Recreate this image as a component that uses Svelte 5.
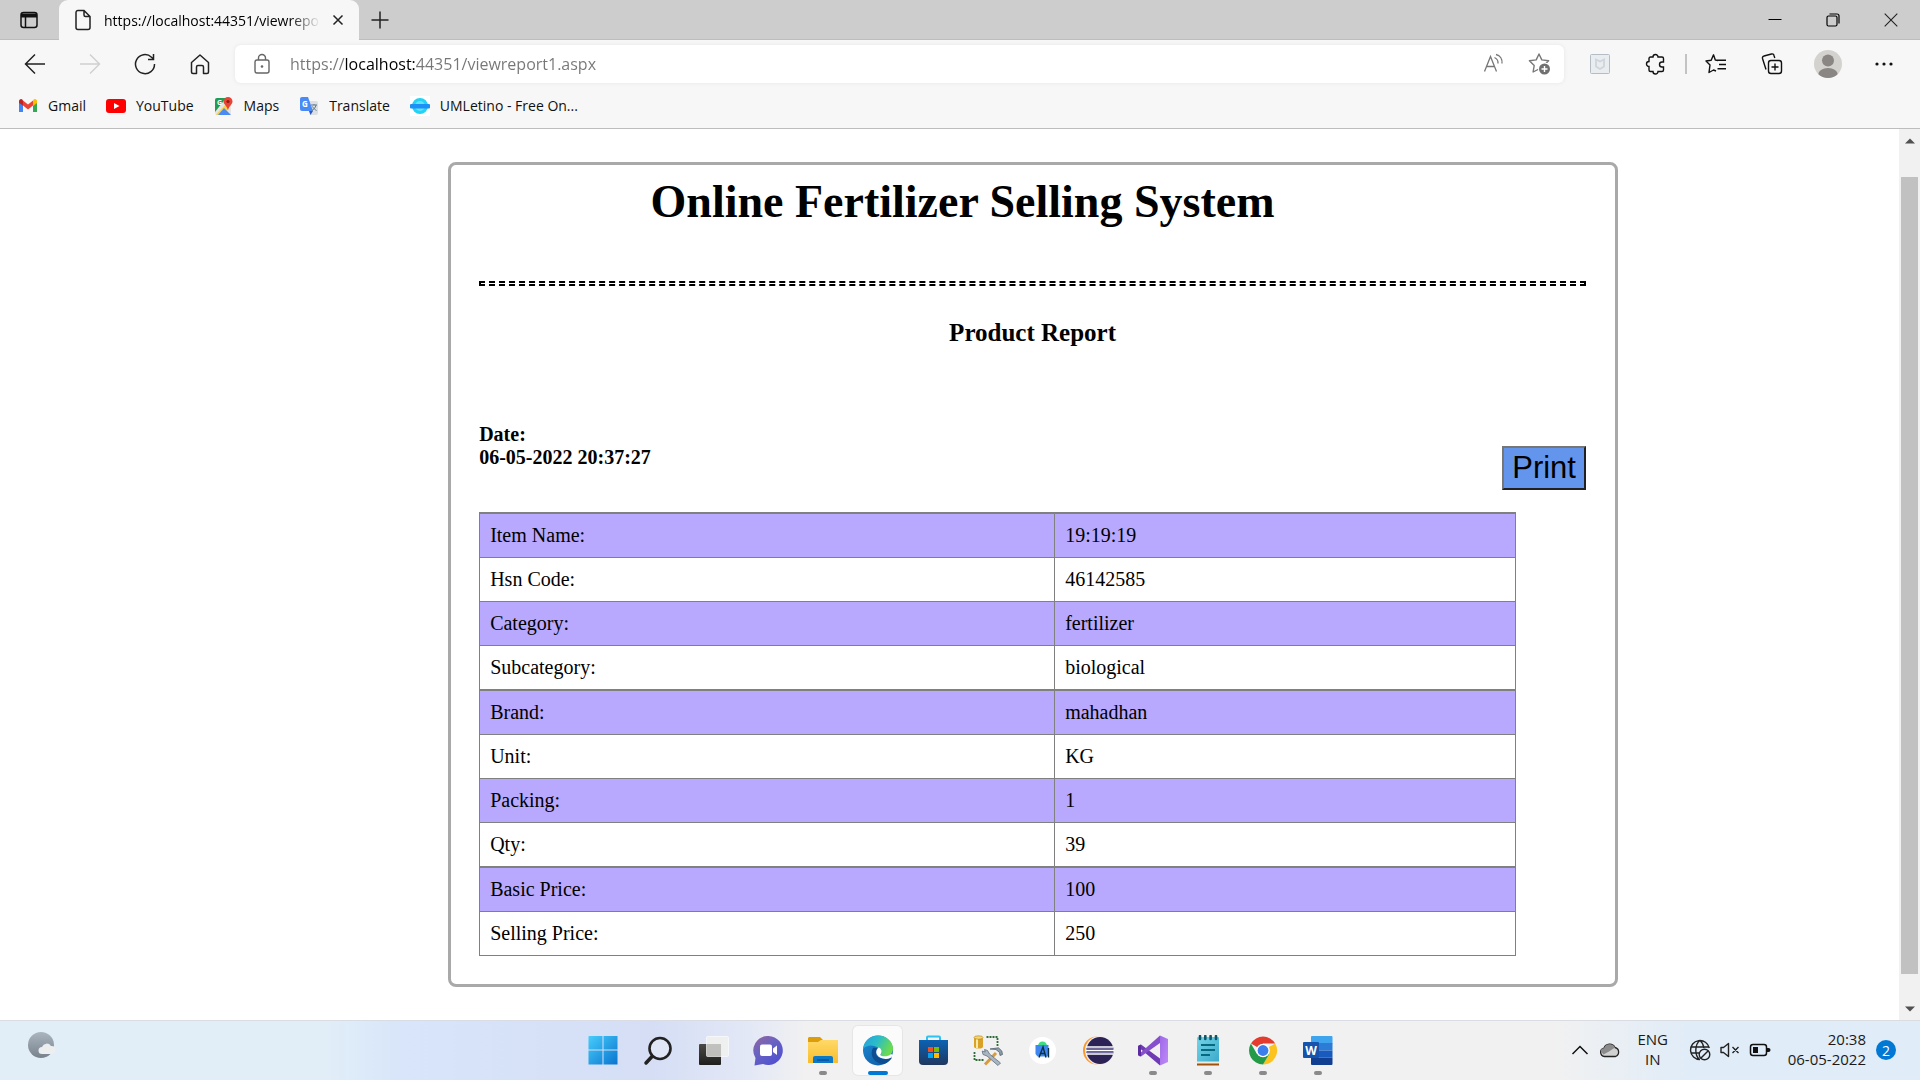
<script>
  const bookmarks = [
    { id: 'gmail', label: 'Gmail' },
    { id: 'youtube', label: 'YouTube' },
    { id: 'maps', label: 'Maps' },
    { id: 'translate', label: 'Translate' },
    { id: 'uml', label: 'UMLetino - Free On...' }
  ];

  const product = [
    ['Item Name:', '19:19:19'],
    ['Hsn Code:', '46142585'],
    ['Category:', 'fertilizer'],
    ['Subcategory:', 'biological'],
    ['Brand:', 'mahadhan'],
    ['Unit:', 'KG'],
    ['Packing:', '1'],
    ['Qty:', '39'],
    ['Basic Price:', '100'],
    ['Selling Price:', '250']
  ];

  const apps = [
    { id: 'start', name: 'Start' },
    { id: 'search', name: 'Search' },
    { id: 'tasks', name: 'Task view' },
    { id: 'chat', name: 'Chat' },
    { id: 'files', name: 'File Explorer', open: true },
    { id: 'edge', name: 'Microsoft Edge', active: true },
    { id: 'store', name: 'Microsoft Store' },
    { id: 'sql', name: 'SQL tools' },
    { id: 'android', name: 'Android Studio' },
    { id: 'eclipse', name: 'Eclipse' },
    { id: 'vs', name: 'Visual Studio', open: true },
    { id: 'notepad', name: 'Notepad', open: true },
    { id: 'chrome', name: 'Google Chrome', open: true },
    { id: 'word', name: 'Word', open: true }
  ];

  let url = $state('https://localhost:44351/viewreport1.aspx');
</script>

{#snippet bookmarkIcon(id)}
  <svg width="20" height="20" viewBox="0 0 20 20" aria-hidden="true">
    {#if id === 'gmail'}
      <path d="M1 4.500v11.500h4V8z" fill="#4285f4" />
      <path d="M19 4.500v11.500h-4V8z" fill="#34a853" />
      <path d="M15 5v5l4-3V5a2 2 0 0 0-3.500-1.300z" fill="#fbbc04" />
      <path d="M5 9.500V4.500l5 4 5-4v5l-5 4z" fill="#ea4335" />
      <path d="M1 5a2 2 0 0 1 3.500-1.300L5 4.500v5L1 7z" fill="#c5221f" />
    {:else if id === 'youtube'}
      <rect x="0" y="3" width="20" height="14" rx="3" fill="#f00" />
      <path d="M8 7l5.500 3L8 13z" fill="#fff" />
    {:else if id === 'maps'}
      <rect x="1" y="2" width="16" height="17" rx="2" fill="#e4e4e4" />
      <path d="M3 2h9L1 16V4a2 2 0 0 1 2-2z" fill="#1e9e53" />
      <path d="M2 18.500L14 6l3 3-8 10H3z" fill="#fdd33b" />
      <path d="M4 19l6-7 7 7z" fill="#4a8af4" />
      <text x="3" y="8.500" font-size="7" font-weight="700" fill="#fff">G</text>
      <path d="M14 1a4.500 4.500 0 0 1 4.500 4.500c0 3-3.500 4-4.500 9-1-5-4.500-6-4.500-9A4.500 4.500 0 0 1 14 1z" fill="#e94335" />
      <circle cx="14" cy="5.500" r="1.600" fill="#8c1c13" />
    {:else if id === 'translate'}
      <path d="M8 5h9a2 2 0 0 1 2 2v10a2 2 0 0 1-2 2h-6z" fill="#dcdfe3" />
      <path d="M10 15l4 0-2.500 4z" fill="#2a56c6" />
      <path d="M3 1h6l5 14H3a2 2 0 0 1-2-2V3a2 2 0 0 1 2-2z" fill="#4a8af4" />
      <path d="M12 9h6M15 8v1M17 9c-.5 3-2.500 4.500-4 5.500M13.500 10.500c1 2 2.500 3 4 4" stroke="#607988" stroke-width="1" fill="none" />
      <text x="3" y="11" font-size="8" font-weight="700" fill="#fff">G</text>
    {:else}
      <rect width="20" height="20" fill="#fff" />
      <circle cx="10" cy="10" r="6.500" fill="#5fe3fb" stroke="#22d3f5" stroke-width="3" />
      <rect x="0" y="8" width="20" height="4.500" rx="1" fill="#1e90f5" />
    {/if}
  </svg>
{/snippet}

{#snippet appIcon(id)}
  <svg width="32" height="32" viewBox="0 0 32 32" aria-hidden="true">
    {#if id === 'start'}
      <defs>
        <linearGradient id="win" x1="0" y1="0" x2="1" y2="1" gradientUnits="objectBoundingBox">
          <stop offset="0" stop-color="#46cdfb" />
          <stop offset="1" stop-color="#0a74cf" />
        </linearGradient>
      </defs>
      <path d="M2 1h13.500v13.500H1.500V1.500zM16.500 1H30.500v13.500h-14zM1.500 15.500h14v14h-14zM16.500 15.500h14v14h-14z" fill="url(#win)" />
    {:else if id === 'search'}
      <circle cx="18" cy="13.500" r="10.500" fill="#e6ebf7" fill-opacity=".6" stroke="#222" stroke-width="2.600" />
      <path d="M10 21.500L4 28" stroke="#222" stroke-width="3.500" stroke-linecap="round" />
    {:else if id === 'tasks'}
      <defs>
        <linearGradient id="tv" x1="0" y1="0" x2="0" y2="1"><stop offset="0" stop-color="#4a4a47" /><stop offset="1" stop-color="#1e1e1c" /></linearGradient>
      </defs>
      <rect x="2" y="9" width="22" height="21" rx="1" fill="url(#tv)" />
      <rect x="9.500" y="1.500" width="22" height="20" rx="1" fill="#f1f1ee" fill-opacity=".82" stroke="#fff" stroke-opacity=".6" />
      <rect x="10" y="9" width="14" height="12" fill="#aaa" fill-opacity=".45" />
    {:else if id === 'chat'}
      <defs>
        <linearGradient id="ch" x1="0" y1="0" x2=".7" y2="1"><stop offset="0" stop-color="#95659c" /><stop offset=".45" stop-color="#6a63c2" /><stop offset="1" stop-color="#4f50d0" /></linearGradient>
      </defs>
      <path d="M16.500 1a14.500 14.500 0 1 1-5.500 28l-8.500 1.500L3.500 23A14.500 14.500 0 0 1 16.500 1z" fill="url(#ch)" />
      <rect x="8" y="9.500" width="12" height="11.500" rx="2" fill="#fff" />
      <path d="M21 13.500l4-3v9.500l-4-3z" fill="#fff" />
    {:else if id === 'files'}
      <defs>
        <linearGradient id="fo" x1="0" y1="0" x2="0" y2="1"><stop offset="0" stop-color="#ffd968" /><stop offset="1" stop-color="#f8bd2b" /></linearGradient>
      </defs>
      <path d="M2 2h11l3 3-3 5H1V3z" fill="#dd9d0b" />
      <path d="M1 7h10l3-2h17v23H1z" fill="url(#fo)" />
      <path d="M8 21h16a2 2 0 0 1 2 2v5H6v-5a2 2 0 0 1 2-2z" fill="#0c78c8" />
      <path d="M10 25h12" stroke="#08529b" stroke-width="1.500" />
    {:else if id === 'edge'}
      <defs>
        <linearGradient id="e1" x1="0" y1="0" x2="1" y2=".4"><stop offset="0" stop-color="#279fdc" /><stop offset=".5" stop-color="#2bbcc9" /><stop offset="1" stop-color="#6bdb4e" /></linearGradient>
        <linearGradient id="e2" x1="0" y1="0" x2=".6" y2="1"><stop offset="0" stop-color="#1a8fd8" /><stop offset="1" stop-color="#1260a9" /></linearGradient>
      </defs>
      <circle cx="16" cy="15.500" r="15" fill="url(#e2)" />
      <path d="M1 14C2 5.500 8.500.5 16 .5c8.500 0 15 6 15 13 0 6-4.500 8.500-8.500 8.500-3 0-4.500-1.200-4-2.200 1.500-2 1-4.800-1.500-6.600C11 9 4.500 10 1 14z" fill="url(#e1)" />
      <path d="M11 13c-3 5-1 13 7 15.500 5 1.500 9-1.500 11.500-5 .5-1-.3-1.200-1-.7-5.500 3-12 1-14-2.500-1.200-2.500-.6-5 1-7-2-.8-3.500-.8-4.500-.3z" fill="#0e4d92" />
      <path d="M16.500 12.500c-2 1.500-3 4.500-1.700 7 2.500 4.500 9.500 5.500 14 3.200L31 20l-2-1c-2 2.500-9.500 3.300-10.500.9-.4-.8 1-1.500 1-3.500 0-1.700-1-3.500-3-3.900z" fill="#fff" />
    {:else if id === 'store'}
      <defs>
        <linearGradient id="st" x1="0" y1="0" x2="0" y2="1"><stop offset="0" stop-color="#0b62b4" /><stop offset="1" stop-color="#20375f" /></linearGradient>
      </defs>
      <path d="M10 6V2.500a1 1 0 0 1 1-1h11a1 1 0 0 1 1 1V6" fill="none" stroke="#2cc2f4" stroke-width="2" />
      <path d="M2 5h29v21a4 4 0 0 1-4 4H6a4 4 0 0 1-4-4z" fill="url(#st)" />
      <rect x="11" y="12" width="5" height="5" fill="#f25022" />
      <rect x="17" y="12" width="5" height="5" fill="#7fba00" />
      <rect x="11" y="18" width="5" height="5" fill="#00a4ef" />
      <rect x="17" y="18" width="5" height="5" fill="#ffb900" />
    {:else if id === 'sql'}
      <path d="M2 2.500v9a4.500 2 0 0 0 9 0v-9z" fill="#d9a125" />
      <path d="M4 3v10l2 .5V3z" fill="#fbe9a6" />
      <ellipse cx="6.500" cy="2.500" rx="4.500" ry="1.700" fill="#f4d673" stroke="#b07d10" stroke-width=".6" />
      <path d="M14.500 2h11v10M2.500 17v8h10" fill="none" stroke="#2f6b34" stroke-width="1.800" stroke-dasharray="2 1" />
      <path d="M13 29.500L24 18" stroke="#d99a3d" stroke-width="3" />
      <path d="M12.500 14.500l3 1 2 3.500 11 9-2.500 2.500L15 21l-4-1.500-.8-3.500 3 1z" fill="#a9b5c1" stroke="#61707e" stroke-width=".8" />
      <path d="M18 14l6 .5 3.500 3 .5 3 2.500-1-.7-3.500-3.300-3.200z" fill="#8f9dab" stroke="#56636f" stroke-width=".8" />
    {:else if id === 'android'}
      <circle cx="15.500" cy="15.500" r="13.500" fill="#fff" />
      <path d="M11 11a4.500 4.500 0 0 1 9 0z" fill="#3ddc84" />
      <path d="M8.500 10h13v9l-1 2.500h-10L8.500 19z" fill="#3f86f0" />
      <path d="M12 22.500L16 12l3 10.500M13.500 18.500h4.500M21.500 13v9.500" fill="none" stroke="#073042" stroke-width="1.400" />
    {:else if id === 'eclipse'}
      <circle cx="15" cy="15.500" r="14" fill="#f79a30" />
      <circle cx="17.500" cy="15.500" r="14.500" fill="#f1e9ee" />
      <circle cx="18" cy="15.500" r="13.500" fill="#2c2255" />
      <path d="M4 12h27M4 15.500h28M4 19h27" stroke="#fff" stroke-width="1.600" />
      <path d="M4 13.800h27M4 17.300h27" stroke="#8e86b4" stroke-width="1" />
    {:else if id === 'vs'}
      <defs>
        <linearGradient id="vsg" x1="0" y1="0" x2="1" y2="1"><stop offset="0" stop-color="#9d6ae6" /><stop offset="1" stop-color="#c08afa" /></linearGradient>
      </defs>
      <path d="M1 11l3-1.500 19 14v7L3 13.500v8L1 20z" fill="#6f3bb5" />
      <path d="M1 20l3 1.500L23 8V.5z" fill="#8650cc" />
      <path d="M1 11l3-1.500v12L1 20z" fill="#5c2b9d" />
      <path d="M23 .5L31 4v23l-8 3.500z" fill="url(#vsg)" />
    {:else if id === 'notepad'}
      <defs>
        <linearGradient id="np" x1="0" y1="0" x2="1" y2="1"><stop offset="0" stop-color="#73d5e8" /><stop offset="1" stop-color="#3aa9cb" /></linearGradient>
      </defs>
      <rect x="5" y="2" width="22" height="26" rx="1" fill="url(#np)" />
      <rect x="5" y="26.500" width="22" height="2" fill="#f0ead9" />
      <rect x="5" y="28.500" width="22" height="2" fill="#a0520f" />
      <path d="M8 1v3M13.300 1v3M18.600 1v3M24 1v3" stroke="#095768" stroke-width="2.600" stroke-linecap="round" />
      <path d="M9 10h14M9 15h14M9 20h9" stroke="#08697e" stroke-width="2" />
    {:else if id === 'chrome'}
      <path d="M16 15.500L4 8.500A14 14 0 0 1 28.200 8.500H16z" fill="#e33b2e" />
      <path d="M16 15.500L28.200 8.500A14 14 0 0 1 16 29.500l6-10.500z" fill="#fcc31e" />
      <path d="M16 15.500l6 4-6 10A14 14 0 0 1 3.900 8.500L10 19z" fill="#229a48" />
      <circle cx="16" cy="15.500" r="6.800" fill="#fff" />
      <circle cx="16" cy="15.500" r="5.400" fill="#3b7ded" />
    {:else}
      <path d="M10 1h19.500a1 1 0 0 1 1 1v6.500H9V2a1 1 0 0 1 1-1z" fill="#3fa3ee" />
      <path d="M9 8h21.500v7.500H9z" fill="#2b7cd6" />
      <path d="M9 15.500h21.500v7H9z" fill="#185abd" />
      <path d="M9 22.500h21.500V29a1 1 0 0 1-1 1H10a1 1 0 0 1-1-1z" fill="#103f91" />
      <rect x="1" y="7" width="16" height="16" rx="1" fill="#1553ac" />
      <text x="9" y="19.500" text-anchor="middle" font-size="12" font-weight="700" fill="#fff">W</text>
    {/if}
  </svg>
{/snippet}

<div class="screen">
  <header class="tabs">
    <button class="tool wide" aria-label="Tab actions">
      <svg width="20" height="20" viewBox="0 0 20 20"><rect x="2" y="2.500" width="16" height="15" rx="2.500" fill="none" stroke="#111" stroke-width="1.500" /><path d="M2 3.500h16v4H2z" fill="#111" /><path d="M6.500 7v10" stroke="#111" stroke-width="1.500" /></svg>
    </button>
    <div class="tab">
      <svg width="18" height="22" viewBox="0 0 18 22"><path d="M4 1.500h6l6 6V18.500a2 2 0 0 1-2 2H4a2 2 0 0 1-2-2V3.500a2 2 0 0 1 2-2zM10 1.500V6a1.500 1.500 0 0 0 1.500 1.500H16" fill="none" stroke="#222" stroke-width="1.500" /></svg>
      <span class="tab-title">https://localhost:44351/viewreport1.aspx</span>
      <button class="close" aria-label="Close tab">
        <svg width="12" height="12" viewBox="0 0 12 12"><path d="M1.500 1.500l9 9M10.500 1.500l-9 9" stroke="#222" stroke-width="1.500" /></svg>
      </button>
    </div>
    <button class="tool new" aria-label="New tab">
      <svg width="18" height="18" viewBox="0 0 18 18"><path d="M9 .5v17M.5 9h17" stroke="#222" stroke-width="1.500" /></svg>
    </button>
    <div class="grow"></div>
    <button class="tool wide" aria-label="Minimize"><svg width="14" height="14" viewBox="0 0 14 14"><path d="M.5 6.500h13" stroke="#000" /></svg></button>
    <button class="tool wide" aria-label="Restore"><svg width="14" height="14" viewBox="0 0 14 14"><rect x="1" y="3" width="10" height="10" rx="1.500" fill="none" stroke="#000" stroke-width="1.200" /><path d="M3.500 1H11a2 2 0 0 1 2 2v7.500" fill="none" stroke="#000" stroke-width="1.200" /></svg></button>
    <button class="tool wide" aria-label="Close window"><svg width="14" height="14" viewBox="0 0 14 14"><path d="M.7.7l12.600 12.600M13.300.7L.7 13.300" stroke="#222" stroke-width="1.100" /></svg></button>
  </header>

  <nav class="toolbar" aria-label="Browser">
    <button class="nav" aria-label="Back"><svg width="22" height="22" viewBox="0 0 22 22"><path d="M21 11H1.500M11 1.500L1.500 11l9.500 9.500" fill="none" stroke="#222" stroke-width="1.500" /></svg></button>
    <button class="nav" aria-label="Forward"><svg width="22" height="22" viewBox="0 0 22 22"><path d="M1 11h19.500M11 1.500l9.500 9.500-9.500 9.500" fill="none" stroke="#d0d0d0" stroke-width="1.500" /></svg></button>
    <button class="nav" aria-label="Refresh"><svg width="22" height="22" viewBox="0 0 22 22"><path d="M20.500 11A9.500 9.500 0 1 1 17.500 4.200L19.500 6M19.500 1v5.500H14" fill="none" stroke="#222" stroke-width="1.500" /></svg></button>
    <button class="nav" aria-label="Home"><svg width="22" height="22" viewBox="0 0 22 22"><path d="M2.500 9.500L11 2l8.500 7.500V19a1.500 1.500 0 0 1-1.500 1.500h-3.500V14a1.500 1.500 0 0 0-1.500-1.500H9A1.500 1.500 0 0 0 7.500 14v6.500H4A1.500 1.500 0 0 1 2.500 19z" fill="none" stroke="#222" stroke-width="1.500" stroke-linejoin="round" /></svg></button>
    <div class="address">
      <svg width="18" height="22" viewBox="0 0 18 22"><rect x="2" y="7" width="14" height="13" rx="2" fill="none" stroke="#666" stroke-width="1.400" /><path d="M5.500 7V5a3.500 3.500 0 0 1 7 0v2" fill="none" stroke="#666" stroke-width="1.400" /><circle cx="9" cy="13.500" r="1.300" fill="#666" /></svg>
      <input type="text" aria-label="Address" bind:value={url} />
      <button class="inner" aria-label="Read aloud"><svg width="22" height="22" viewBox="0 0 22 22"><path d="M1.500 18.500L7.500 3.500l6 15M3.500 13.500h8M11.500 4.500a6 6 0 0 1 3.500 6M13 1.500c4 1 6.500 4.500 6 9" fill="none" stroke="#777" stroke-width="1.300" /></svg></button>
      <button class="inner" aria-label="Add to favorites"><svg width="24" height="24" viewBox="0 0 24 24"><path d="M11 2l2.800 5.900 6.800.9-4.800 4.700 1 6.500-5.800-3-5.900 3 1.100-6.500L1.400 8.800l6.800-.9z" fill="none" stroke="#777" stroke-width="1.400" stroke-linejoin="round" /><circle cx="16.500" cy="17" r="6.500" fill="#fff" /><circle cx="16.500" cy="17" r="5.500" fill="#707070" /><path d="M16.500 14v6M13.500 17h6" stroke="#fff" stroke-width="1.400" /></svg></button>
    </div>
    <button class="ext" aria-label="WebAdvisor"><svg width="22" height="22" viewBox="0 0 22 22"><rect x="1.500" y="1.500" width="19" height="19" rx="1" fill="#e9edf0" stroke="#b4bdc5" /><path d="M7 6.500l4 2 4-2v7l-4 2.500-4-2.500z" fill="none" stroke="#cfd5da" stroke-width="1.800" /></svg></button>
    <button class="ext" aria-label="Extensions"><svg width="22" height="22" viewBox="0 0 22 22"><path d="M5.500 4H8a2.500 2.500 0 0 1 5 0h4a1.500 1.500 0 0 1 1.500 1.500V9h-1.500a2.500 2.500 0 0 0 0 5h1.500v3a1.500 1.500 0 0 1-1.500 1.500h-4a2.500 2.500 0 0 1-5 0H5.500A1.500 1.500 0 0 1 4 17v-3.500a2.500 2.500 0 0 1 0-5V5.500A1.500 1.500 0 0 1 5.500 4z" fill="none" stroke="#111" stroke-width="1.400" /></svg></button>
    <div class="divider"></div>
    <button class="ext" aria-label="Favorites"><svg width="22" height="22" viewBox="0 0 22 22"><path d="M13 7.500L10.300 7 8.500 1.800 6.200 7.200 1 8l4 4-1 7.500 4.500-2.500 2.500 1M12.500 7.300h8.500M14 11.500h7M12.500 15.700h8.500" fill="none" stroke="#111" stroke-width="1.400" stroke-linejoin="round" /></svg></button>
    <button class="ext" aria-label="Collections"><svg width="22" height="22" viewBox="0 0 22 22"><rect x="7.500" y="7.500" width="13" height="13" rx="2.500" fill="none" stroke="#111" stroke-width="1.400" /><path d="M14 10.500v7M10.500 14h7M5 16.500L1.500 5.500a2 2 0 0 1 1.500-2.500L10.500 1a2 2 0 0 1 2.500 1.500l.8 2.500" fill="none" stroke="#111" stroke-width="1.400" /></svg></button>
    <button class="ext" aria-label="Profile"><svg width="28" height="28" viewBox="0 0 28 28"><defs><clipPath id="av"><circle cx="14" cy="14" r="14" /></clipPath></defs><g clip-path="url(#av)"><rect width="28" height="28" fill="#d4d2cf" /><circle cx="14" cy="10.500" r="6" fill="#8a8683" /><ellipse cx="14" cy="25" rx="10" ry="7" fill="#8a8683" /></g></svg></button>
    <button class="ext" aria-label="Settings and more"><svg width="20" height="6" viewBox="0 0 20 6"><circle cx="3" cy="3" r="1.600" fill="#111" /><circle cx="10" cy="3" r="1.600" fill="#111" /><circle cx="17" cy="3" r="1.600" fill="#111" /></svg></button>
  </nav>

  <nav class="bookmarks" aria-label="Favorites bar">
    {#each bookmarks as mark}
      <a href="#{mark.id}">{@render bookmarkIcon(mark.id)}{mark.label}</a>
    {/each}
  </nav>

  <div class="viewport">
    <main>
      <section class="report">
        <h1>Online Fertilizer Selling System</h1>
        <hr />
        <h2>Product Report</h2>
        <div class="meta">
          <div class="date">Date:<br />06-05-2022 20:37:27</div>
          <button class="print">Print</button>
        </div>
        <table>
          <tbody>
            {#each product as [label, value]}
              <tr><th scope="row">{label}</th><td>{value}</td></tr>
            {/each}
          </tbody>
        </table>
      </section>
    </main>
    <div class="scrollbar" aria-hidden="true">
      <svg width="10" height="6" viewBox="0 0 10 6"><path d="M0 5.500L5 .5l5 5z" fill="#505050" /></svg>
      <div class="track"><div class="thumb"></div></div>
      <svg width="10" height="6" viewBox="0 0 10 6"><path d="M0 .5l5 5 5-5z" fill="#505050" /></svg>
    </div>
  </div>

  <footer class="taskbar">
    <button class="weather" aria-label="Weather">
      <svg width="30" height="28" viewBox="0 0 30 28"><defs><linearGradient id="mo" x1="0" y1="0" x2="0" y2="1"><stop offset="0" stop-color="#aab5bf" /><stop offset="1" stop-color="#78828b" /></linearGradient></defs><circle cx="14" cy="14" r="13" fill="url(#mo)" /><path d="M15 23a3.500 3.500 0 0 1 0-7 5 5 0 0 1 9-1 4 4 0 0 1 1 8z" fill="#eceef0" /></svg>
    </button>
    <div class="apps">
      {#each apps as app}
        <button class="app" class:active={app.active} class:open={app.open} aria-label={app.name}>
          {@render appIcon(app.id)}
        </button>
      {/each}
    </div>
    <div class="tray">
      <button aria-label="Show hidden icons"><svg width="18" height="12" viewBox="0 0 18 12"><path d="M1.500 10L9 2.500l7.500 7.500" fill="none" stroke="#111" stroke-width="1.500" /></svg></button>
      <button aria-label="OneDrive"><svg width="22" height="18" viewBox="0 0 22 18"><path d="M5.500 15.500a4.200 4.200 0 0 1-.5-8.300 6 6 0 0 1 11-.7 4.700 4.700 0 0 1 .5 9z" fill="#d0d0d0" stroke="#222" stroke-width="1.300" /><path d="M5 7.200a6 6 0 0 1 11-.7l-6 4-5.500 3-2.500-3a3 3 0 0 1 3-3.300z" fill="#8b8b8b" /></svg></button>
      <div class="lang">ENG<br />IN</div>
      <button aria-label="No network"><svg width="22" height="22" viewBox="0 0 22 22"><g fill="none" stroke="#222" stroke-width="1.400"><path d="M11 20.500A9.500 9.500 0 1 1 20.300 9M1.500 8h18M1.500 14H10M11 1.500c-5.500 4-5.500 15-.5 19M11 1.500c2.500 2 3.500 4.500 3.800 7.500" /><circle cx="15.500" cy="15.500" r="5.300" /><path d="M12 19l7-7" /></g></svg></button>
      <button aria-label="Muted"><svg width="22" height="18" viewBox="0 0 22 18"><path d="M2 6.500h2.500L9.500 2.500v13L4.500 11.500H2zM13.500 6l6 6M19.500 6l-6 6" fill="none" stroke="#222" stroke-width="1.400" stroke-linejoin="round" /></svg></button>
      <button aria-label="Battery"><svg width="22" height="14" viewBox="0 0 22 14"><rect x="1.500" y="1.500" width="16" height="11" rx="2.500" fill="none" stroke="#111" stroke-width="1.500" /><rect x="4" y="4" width="5" height="6" fill="#111" /><path d="M18 5h1.500a2 2 0 0 1 0 4H18z" fill="#111" /></svg></button>
      <div class="clock">20:38<br />06-05-2022</div>
      <button class="badge" aria-label="2 notifications">2</button>
    </div>
  </footer>
</div>

<style>
  :global(body) {
    margin: 0;
  }

  .screen {
    --ui: 'Segoe UI', 'Open Sans', 'Noto Sans', sans-serif;
    display: flex;
    flex-direction: column;
    min-height: 100vh;
    background: #fff;
    color: #000;
    font-family: var(--ui);
  }

  .screen * {
    box-sizing: border-box;
  }

  svg {
    display: block;
    flex: none;
  }

  button {
    display: flex;
    align-items: center;
    justify-content: center;
    flex: none;
    padding: 0;
    border: 0;
    background: none;
    font-family: inherit;
  }

  .tabs {
    display: flex;
    height: 40px;
    background: #cdcdcd;
    box-shadow: inset 0 -1px #bdbdbd;
  }

  .tool {
    width: 42px;
  }

  .wide {
    width: 58px;
    padding-bottom: 1px;
  }

  .tab {
    display: flex;
    align-items: center;
    flex: 0 1 300px;
    gap: 12px;
    min-width: 0;
    margin-left: 1px;
    padding: 0 15px;
    border-radius: 9px 9px 0 0;
    background: #f7f7f7;
    font-size: 14px;
  }

  .tab-title {
    flex: 1;
    min-width: 0;
    overflow: hidden;
    white-space: nowrap;
    mask-image: linear-gradient(to right, #000 86%, transparent);
  }

  .tab .close {
    width: 12px;
  }

  .grow {
    flex: 1;
  }

  .toolbar {
    display: flex;
    align-items: center;
    height: 48px;
    padding: 0 8px 0 7px;
    background: #f7f7f7;
  }

  .nav {
    width: 55px;
    height: 40px;
  }

  .address {
    display: flex;
    align-items: center;
    flex: 1;
    height: 38px;
    margin: 0 8px;
    padding: 0 1px 0 18px;
    border-radius: 6px;
    background: #fff;
    box-shadow: 0 0 4px #e6e6e6;
  }

  .address input {
    flex: 1;
    min-width: 0;
    margin-left: 19px;
    padding: 0;
    border: 0;
    outline: 0;
    background: linear-gradient(to right, #767676 55px, #000 55px, #000 126px, #767676 126px);
    background-clip: text;
    color: transparent;
    font-family: inherit;
    font-size: 16px;
    line-height: 24px;
  }

  .inner {
    width: 46px;
    height: 38px;
  }

  .ext {
    width: 56px;
    height: 40px;
  }

  .divider {
    width: 2px;
    height: 20px;
    margin: 0 1px;
    background: #c3c3c3;
  }

  .bookmarks {
    display: flex;
    align-items: center;
    gap: 20px;
    height: 41px;
    padding: 0 18px 5px;
    border-bottom: 1px solid #bdbdbd;
    background: #f7f7f7;
    font-size: 14px;
  }

  .bookmarks a {
    display: flex;
    align-items: center;
    gap: 10px;
    color: #111;
    text-decoration: none;
    white-space: nowrap;
  }

  .viewport {
    display: flex;
    flex: 1;
  }

  main {
    flex: 1;
    padding: 33px 0;
    font-family: 'Times New Roman', 'Liberation Serif', serif;
    font-size: 20px;
  }

  .report {
    margin: 0 14.8% 0 23.6%;
    padding: 10px 29px 28px 28px;
    border: 3px solid #a9a9a9;
    border-radius: 8px;
  }

  h1 {
    margin: 0;
    padding-right: 140px;
    font-size: 46px;
    line-height: 54px;
    text-align: center;
  }

  hr {
    height: 5px;
    margin: 52px 0 33px;
    border: 2px dashed #000;
  }

  h2 {
    margin: 0 0 76px;
    font-size: 25px;
    line-height: 28px;
    text-align: center;
  }

  .meta {
    display: flex;
    align-items: flex-start;
    justify-content: space-between;
    margin-bottom: 22px;
  }

  .date {
    font-weight: 700;
    line-height: 23px;
  }

  .print {
    height: 44px;
    margin-top: 23px;
    padding: 0 8px 1px;
    border: 2px solid;
    border-color: #767676 #212121 #212121 #767676;
    background: #6495ed;
    color: #000;
    font-family: Arial, 'Liberation Sans', sans-serif;
    font-size: 31px;
  }

  table {
    width: 93.7%;
    border-right: 1px solid #808080;
    border-bottom: 1px solid #808080;
    border-spacing: 0;
  }

  th,
  td {
    height: 44px;
    padding: 0 10px 2px;
    border-top: 1px solid #808080;
    border-left: 1px solid #808080;
    font-weight: 400;
    line-height: 24px;
    text-align: left;
  }

  th {
    width: 55.5%;
  }

  tr:nth-child(odd) {
    background: #b8a9ff;
  }

  tr:nth-child(4n + 1) > * {
    height: 45px;
    border-top-width: 2px;
  }

  .scrollbar {
    display: flex;
    flex-direction: column;
    align-items: center;
    width: 21px;
    padding: 9px 0 8px;
    background: #f1f1f1;
  }

  .track {
    flex: 1;
    width: 17px;
    padding: 33px 0 32px;
  }

  .thumb {
    height: 100%;
    background: #c1c1c1;
  }

  .taskbar {
    display: grid;
    grid-template-columns: 1fr auto 1fr;
    height: 60px;
    border-top: 1px solid #d9dde3;
    background: linear-gradient(to right, #e1eef8 0 17%, #d8e5fa 21%, #d5def5 34%, #e3e8f6 39%, #f1f1f1 42% 81%, #e0ecf8 88%);
  }

  .weather {
    justify-self: start;
    align-self: start;
    margin: 10px 27px;
  }

  .apps {
    display: flex;
    align-items: center;
  }

  .app {
    position: relative;
    width: 49px;
    height: 49px;
    margin: 0 3px;
    border-radius: 5px;
  }

  .app.active {
    background: #fbfbfb;
    box-shadow: 0 0 0 1px #e6e6e6;
  }

  /* Indicator under a running application */
  .app.open::after,
  .app.active::after {
    position: absolute;
    bottom: 0;
    width: 8px;
    height: 4px;
    border-radius: 2px;
    background: #8a8a8a;
    content: '';
  }

  .app.active::after {
    width: 20px;
    background: #0078d4;
  }

  .tray {
    display: flex;
    align-items: center;
    justify-content: flex-end;
    padding: 0 24px 1px 0;
    color: #1a1a1a;
    font-size: 15px;
    line-height: 20px;
  }

  .tray button {
    width: 30px;
  }

  .lang,
  .clock {
    padding-bottom: 2px;
  }

  .lang {
    width: 56px;
    text-align: center;
  }

  .lang + button {
    margin-left: 4px;
  }

  .clock {
    margin: 0 10px 0 13px;
    text-align: right;
  }

  .tray .badge {
    width: 20px;
    height: 20px;
    border-radius: 50%;
    background: #0078d4;
    color: #fff;
    font-size: 14px;
  }
</style>
